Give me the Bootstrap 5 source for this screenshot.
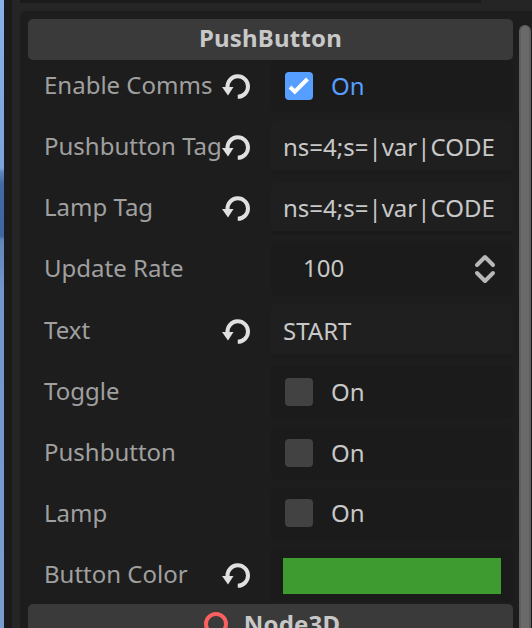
<!DOCTYPE html>
<html lang="en">
<head>
<meta charset="utf-8">
<meta name="viewport" content="width=device-width, initial-scale=1">
<title>Inspector</title>
<link href="https://cdn.jsdelivr.net/npm/bootstrap@5.3.0/dist/css/bootstrap.min.css" rel="stylesheet">
<style>
body{background:#252525;font-family:"Noto Sans","Open Sans",sans-serif;font-size:24px;line-height:33px;color:#c8c8c8;height:628px}
.viewport3d{width:4px;background:linear-gradient(#8ab0e8 0,#7da3dc 168px,#5f86be 172px,#426aa5 184px,#3f66a2 236px,#6285ba 240px,#7297cd 290px,#7a9dd2 628px)}
.divider{width:8px;background:#1b1b1b}
.dock{padding-left:8px}
.topstrip{height:3px;width:461px;margin-bottom:8px;background:#1b1b1b}
.inspector{background:#1d1d1d;border-top-left-radius:6px;padding:8px 0 0 8px}
.props{width:485px}
.category{height:41px;background:#3a3a3a;border-radius:5px;font-weight:700;letter-spacing:.2px}
.category-node{padding:1px 0 3px 3px}
.prop{height:61px}
.prop-tall{height:62px}
.prop-last{height:55px}
.prop-name{width:243px;height:53px;padding:0 20px 4px 16px;color:#a0a0a0}
.prop-name svg{margin-top:5px}
.name-long svg{margin-left:-1px}
.field{width:242px;height:53px;background:#1b1b1b;border-radius:5px;padding:0 0 2px 14px}
.field-text{background:#1f1f1f;border-bottom:4px solid #1a1a1a;padding:2px 0 0 12px;border-radius:5px 5px 0 0}
.field-number{padding:0 16px 2px 32px}
.field-number span{margin-top:-2px}
.prop-tall .field,.prop-tall .prop-name{height:54px}
.box{width:28px;height:28px;border-radius:4px;background:#424242;margin-right:18px}
.box-on{background:#569eff}
.text-on{color:#569eff}
.swatch{width:218px;height:36px;background:#3d9b30;margin:2px 0 0 -2px}
.scroll{width:12px;margin:6px 1px 0 6px;background:#6a6a6a;border-radius:6px 6px 0 0;border:solid #5e5e5e;border-width:1px 2px 0}
</style>
<script src="https://cdn.jsdelivr.net/npm/bootstrap@5.3.0/dist/js/bootstrap.bundle.min.js"></script>
</head>
<body class="overflow-hidden d-flex">
<svg class="d-none">
  <symbol id="revert" viewBox="0 0 30 26"><path d="M6.5 13.5A10.25 10.25 0 1 1 16.75 23.3" fill="none" stroke="#e0e0e0" stroke-width="4" transform="translate(0 -.5)"/><path d="M1 13h11.5L7 21.5z" fill="#e0e0e0"/></symbol>
</svg>
<div class="viewport3d flex-shrink-0"></div>
<div class="divider flex-shrink-0"></div>
<div class="dock flex-grow-1 d-flex flex-column">
  <div class="topstrip flex-shrink-0"></div>
  <div class="inspector flex-grow-1 d-flex overflow-hidden">
    <div class="props flex-shrink-0">
      <div class="category d-flex align-items-center justify-content-center pb-1">PushButton</div>
      <div class="prop d-flex"><div class="prop-name d-flex align-items-center justify-content-between text-nowrap"><span>Enable Comms</span><svg width="30" height="26" class="flex-shrink-0"><use href="#revert"/></svg></div><div class="field d-flex align-items-center"><span class="box box-on d-flex"><svg width="28" height="28"><path d="M5 15 9.8 19.6 22.5 7" fill="none" stroke="#fff" stroke-width="4"/></svg></span><span class="text-on">On</span></div></div>
      <div class="prop d-flex"><div class="prop-name name-long pe-0 d-flex align-items-center text-nowrap"><span>Pushbutton Tag</span><svg width="30" height="26" class="flex-shrink-0"><use href="#revert"/></svg></div><div class="field field-text d-flex align-items-center">ns=4;s=|var|CODE</div></div>
      <div class="prop d-flex"><div class="prop-name d-flex align-items-center justify-content-between text-nowrap"><span>Lamp Tag</span><svg width="30" height="26" class="flex-shrink-0"><use href="#revert"/></svg></div><div class="field field-text d-flex align-items-center">ns=4;s=|var|CODE</div></div>
      <div class="prop d-flex"><div class="prop-name d-flex align-items-center"><span>Update Rate</span></div><div class="field field-number d-flex align-items-center justify-content-between"><span>100</span><svg width="24" height="32" fill="none" stroke="#b8b8b8" stroke-width="4" stroke-linecap="round" stroke-linejoin="round"><path d="M4 12 12 4l8 8M4 20l8 8 8-8"/></svg></div></div>
      <div class="prop prop-tall d-flex"><div class="prop-name d-flex align-items-center justify-content-between text-nowrap"><span>Text</span><svg width="30" height="26" class="flex-shrink-0"><use href="#revert"/></svg></div><div class="field field-text d-flex align-items-center">START</div></div>
      <div class="prop d-flex"><div class="prop-name d-flex align-items-center"><span>Toggle</span></div><div class="field d-flex align-items-center"><span class="box"></span><span>On</span></div></div>
      <div class="prop d-flex"><div class="prop-name d-flex align-items-center"><span>Pushbutton</span></div><div class="field d-flex align-items-center"><span class="box"></span><span>On</span></div></div>
      <div class="prop d-flex"><div class="prop-name d-flex align-items-center"><span>Lamp</span></div><div class="field d-flex align-items-center pb-1"><span class="box"></span><span>On</span></div></div>
      <div class="prop prop-last d-flex"><div class="prop-name d-flex align-items-center justify-content-between text-nowrap"><span>Button Color</span><svg width="30" height="26" class="flex-shrink-0"><use href="#revert"/></svg></div><div class="field d-flex align-items-center"><span class="swatch"></span></div></div>
      <div class="category category-node d-flex align-items-center justify-content-center"><svg class="me-3" width="24" height="24"><circle cx="12" cy="12" r="10" fill="none" stroke="#fc5f5f" stroke-width="4"/></svg>Node3D</div>
    </div>
    <div class="scroll flex-shrink-0"></div>
  </div>
</div>
</body>
</html>
